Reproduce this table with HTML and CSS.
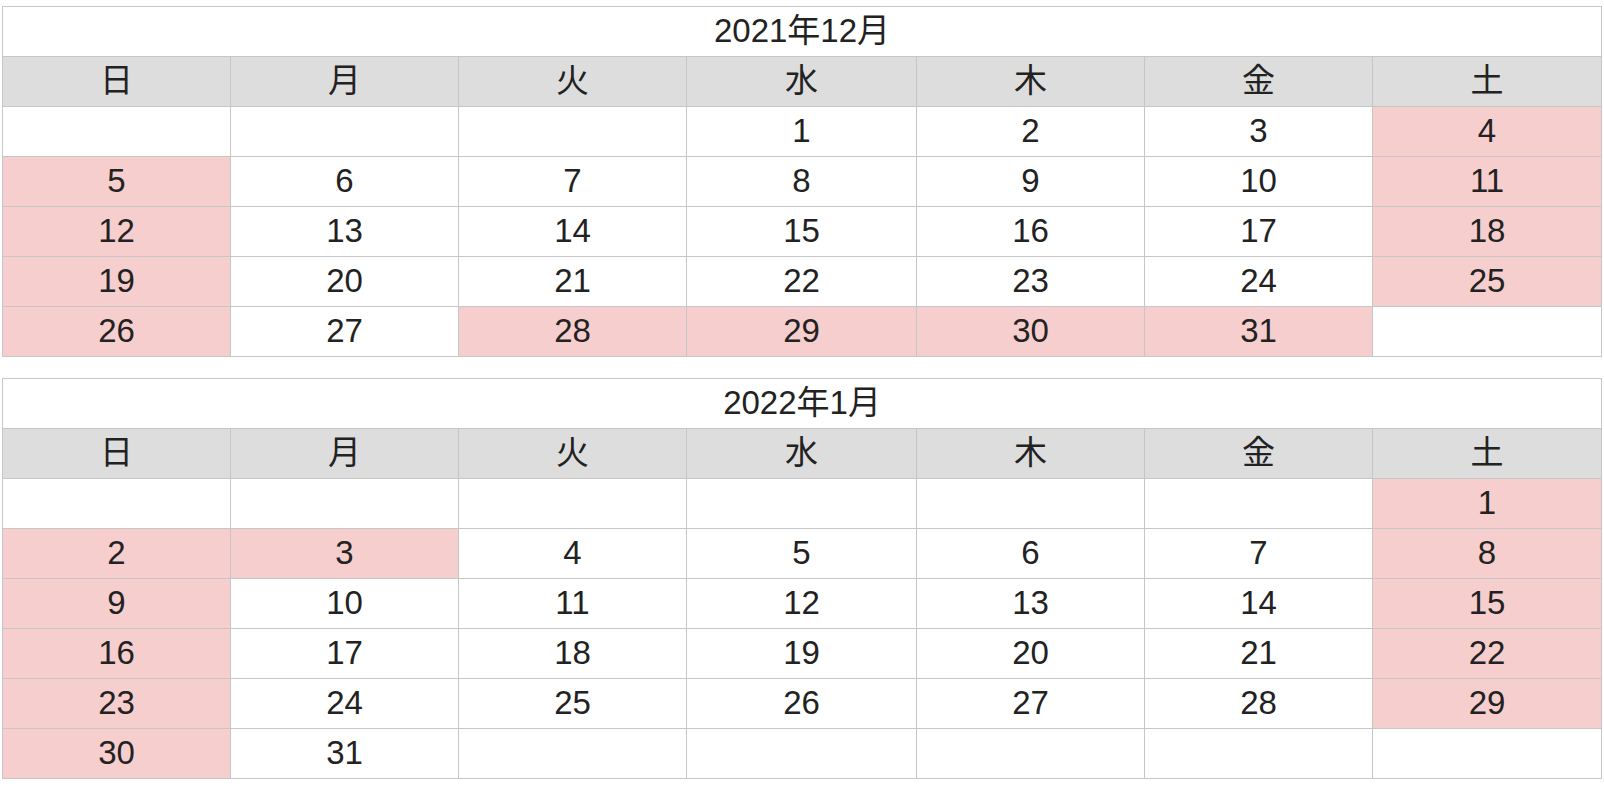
FILE: index.html
```html
<!DOCTYPE html>
<html lang="ja">
<head>
<meta charset="utf-8">
<title>カレンダー</title>
<link rel="stylesheet" href="styles.css">
</head>
<body>
<div class="calendars">
  <table class="cal">
    <colgroup><col class="c1"><col class="c2"><col class="c3"><col class="c4"><col class="c5"><col class="c6"><col class="c7"></colgroup>
    <thead>
      <tr><th class="title" colspan="7">2021年12月</th></tr>
      <tr class="week"><th>日</th><th>月</th><th>火</th><th>水</th><th>木</th><th>金</th><th>土</th></tr>
    </thead>
    <tbody>
      <tr><td></td><td></td><td></td><td>1</td><td>2</td><td>3</td><td class="off">4</td></tr>
      <tr><td class="off">5</td><td>6</td><td>7</td><td>8</td><td>9</td><td>10</td><td class="off">11</td></tr>
      <tr><td class="off">12</td><td>13</td><td>14</td><td>15</td><td>16</td><td>17</td><td class="off">18</td></tr>
      <tr><td class="off">19</td><td>20</td><td>21</td><td>22</td><td>23</td><td>24</td><td class="off">25</td></tr>
      <tr><td class="off">26</td><td>27</td><td class="off">28</td><td class="off">29</td><td class="off">30</td><td class="off">31</td><td></td></tr>
    </tbody>
  </table>
  <table class="cal">
    <colgroup><col class="c1"><col class="c2"><col class="c3"><col class="c4"><col class="c5"><col class="c6"><col class="c7"></colgroup>
    <thead>
      <tr><th class="title" colspan="7">2022年1月</th></tr>
      <tr class="week"><th>日</th><th>月</th><th>火</th><th>水</th><th>木</th><th>金</th><th>土</th></tr>
    </thead>
    <tbody>
      <tr><td></td><td></td><td></td><td></td><td></td><td></td><td class="off">1</td></tr>
      <tr><td class="off">2</td><td class="off">3</td><td>4</td><td>5</td><td>6</td><td>7</td><td class="off">8</td></tr>
      <tr><td class="off">9</td><td>10</td><td>11</td><td>12</td><td>13</td><td>14</td><td class="off">15</td></tr>
      <tr><td class="off">16</td><td>17</td><td>18</td><td>19</td><td>20</td><td>21</td><td class="off">22</td></tr>
      <tr><td class="off">23</td><td>24</td><td>25</td><td>26</td><td>27</td><td>28</td><td class="off">29</td></tr>
      <tr><td class="off">30</td><td>31</td><td></td><td></td><td></td><td></td><td></td></tr>
    </tbody>
  </table>
</div>
</body>
</html>
```

FILE: styles.css
```css
html, body {
  margin: 0;
  padding: 0;
  background: #fff;
}

body {
  font-family: "Liberation Sans", "Noto Sans CJK JP", sans-serif;
  color: #222;
}

.calendars {
  display: flex;
  flex-direction: column;
  gap: 21px;
  padding: 6px 0 0 2px;
}

.cal {
  border-collapse: collapse;
  table-layout: fixed;
  width: 1599px;
  font-size: 33px;
}

.cal .c1, .cal .c2, .cal .c3, .cal .c5, .cal .c6 { width: 228px; }
.cal .c4 { width: 230px; }
.cal .c7 { width: 229px; }

.cal th,
.cal td {
  border: 1px solid #c6c6c6;
  height: 50px;
  padding: 0 0 3px;
  text-align: center;
  vertical-align: middle;
  font-weight: normal;
  line-height: 1;
  box-sizing: border-box;
}

.cal .title {
  background: #fff;
}

.cal .week th {
  background: #ddd;
}

.cal td {
  background: #fff;
}

.cal td.off {
  background: #f7cece;
}
```
